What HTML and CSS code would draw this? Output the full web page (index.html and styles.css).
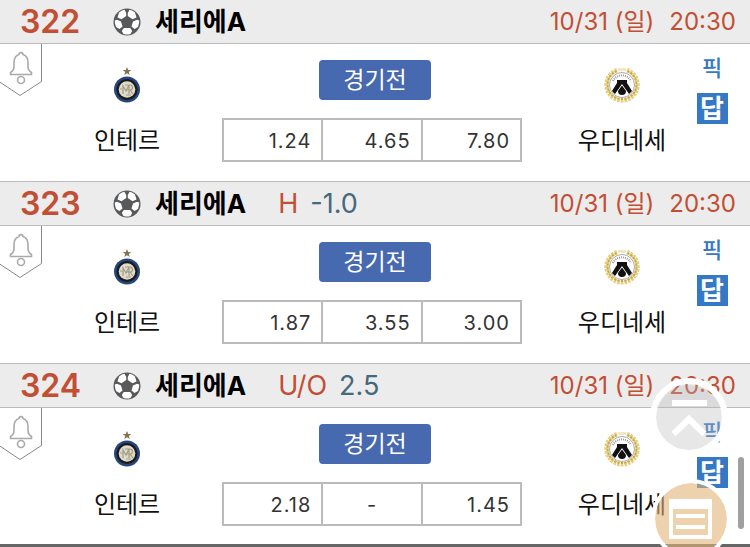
FILE: index.html
```
<!DOCTYPE html>
<html lang="ko">
<head>
    <meta charset="UTF-8">
    <meta name="viewport" content="width=device-width, initial-scale=1.0">
    <title>세리에A</title>
    <link rel="stylesheet" href="styles.css">
</head>
<body>
    <svg class="sprite" aria-hidden="true">
        <symbol id="ball" viewBox="0 0 28 28">
            <circle cx="14" cy="14" r="13.500" fill="#58595a"/>
            <g fill="#fff">
                <path d="M6 4.500Q9 1.800 11.500 1.800L13.200 5V8L8.500 11.300 4.500 9.500z"/>
                <path d="M22 4.500Q19 1.800 16.500 1.800L14.800 5V8l4.700 3.300 4-1.800z"/>
                <path d="M1.800 12.500L4 11.800 8 13.500 9.500 18.500 6.500 21 3 19Q1.500 15 1.800 12.500z"/>
                <path d="M26.200 12.500L24 11.800 20 13.500 18.500 18.500 21.500 21 25 19Q26.500 15 26.200 12.500z"/>
                <path d="M10.800 20h6.400l2 3-1.700 3q-3.500 1-7 0l-1.700-3z"/>
            </g>
        </symbol>
        <symbol id="bell" viewBox="0 0 42 52">
            <path d="M-1 37.500L20 51.500 41.500 37.500V-1" fill="#fff" stroke="#888"/>
            <g fill="none" stroke="#aaa" stroke-width="1.600">
                <path d="M10.500 30.500v-2c2.500-1.500 3.500-3 3.500-6v-4c0-4 2-7 5-8 0-2.500 4-2.500 4 0 3 1 5 4 5 8v4c0 3 1 4.500 3.500 6v2z"/>
                <circle cx="21" cy="36" r="3.500"/>
            </g>
        </symbol>
        <symbol id="inter" viewBox="0 0 36 36">
            <path d="M18 0l1.200 3h3.100l-2.500 2 1 3-2.800-1.800L15.200 8l1-3-2.500-2h3.100z" fill="#80754e"/>
            <circle cx="18" cy="22.500" r="13" fill="#26447f"/>
            <circle cx="18" cy="22.500" r="10.500" fill="#1b1a17"/>
            <circle cx="18" cy="22.500" r="8.300" fill="#dedbcd"/>
            <path d="M14 27v-8l3 5 3-6v9M16 18h5a2.500 2.500 0 010 5h-4M21 23l3 4M13 22h-2M17 28h5" fill="none" stroke="#a39d85" stroke-width="1.200"/>
        </symbol>
        <symbol id="udinese" viewBox="0 0 36 36">
            <path d="M13 3.200A15.500 15.500 0 1023 3.200" fill="none" stroke="#e4cf83" stroke-width="4.500" stroke-dasharray="2.500 1"/>
            <path d="M12.500 4.200A14.500 14.500 0 1023.500 4.200" fill="none" stroke="#c9a637" stroke-width="2" stroke-dasharray="2 1.500"/>
            <path d="M14.500 2.500h7" stroke="#e0c670" stroke-width="2.500" stroke-dasharray="1 1"/>
            <circle cx="18" cy="18" r="12.500" fill="#fff" stroke="#aaa"/>
            <path d="M9 14a10 10 0 0118 0" fill="none" stroke="#999" stroke-width="2" stroke-dasharray="1 1"/>
            <path d="M13 13h10v3l5 8-3 3-7-10-7 10-3-3 5-8z" fill="#111"/>
            <path d="M18 18.500l4 5.500a4 4 0 01-8 0z" fill="#111"/>
        </symbol>
    </svg>

    <main class="list">
        <section class="match">
            <header class="match-head">
                <span class="num">322</span>
                <svg class="ball"><use href="#ball"/></svg>
                <span class="league">세리에A</span>
                <span class="date">10/31 (일)</span>
                <span class="time">20:30</span>
            </header>
            <div class="match-body">
                <button class="alarm" aria-label="알림"><svg><use href="#bell"/></svg></button>
                <div class="team">
                    <svg class="emblem"><use href="#inter"/></svg>
                    <span class="team-name">인테르</span>
                </div>
                <div class="center">
                    <button class="status">경기전</button>
                    <table class="odds"><tr><td>1.24</td><td>4.65</td><td>7.80</td></tr></table>
                </div>
                <div class="team away">
                    <svg class="emblem"><use href="#udinese"/></svg>
                    <span class="team-name">우디네세</span>
                </div>
                <div class="links">
                    <a class="pick" href="#">픽</a>
                    <a class="answer" href="#">답</a>
                </div>
            </div>
        </section>

        <section class="match">
            <header class="match-head">
                <span class="num">323</span>
                <svg class="ball"><use href="#ball"/></svg>
                <span class="league">세리에A</span>
                <span class="type">H</span>
                <span class="line">-1.0</span>
                <span class="date">10/31 (일)</span>
                <span class="time">20:30</span>
            </header>
            <div class="match-body">
                <button class="alarm" aria-label="알림"><svg><use href="#bell"/></svg></button>
                <div class="team">
                    <svg class="emblem"><use href="#inter"/></svg>
                    <span class="team-name">인테르</span>
                </div>
                <div class="center">
                    <button class="status">경기전</button>
                    <table class="odds"><tr><td>1.87</td><td>3.55</td><td>3.00</td></tr></table>
                </div>
                <div class="team away">
                    <svg class="emblem"><use href="#udinese"/></svg>
                    <span class="team-name">우디네세</span>
                </div>
                <div class="links">
                    <a class="pick" href="#">픽</a>
                    <a class="answer" href="#">답</a>
                </div>
            </div>
        </section>

        <section class="match">
            <header class="match-head">
                <span class="num">324</span>
                <svg class="ball"><use href="#ball"/></svg>
                <span class="league">세리에A</span>
                <span class="type">U/O</span>
                <span class="line">2.5</span>
                <span class="date">10/31 (일)</span>
                <span class="time">20:30</span>
            </header>
            <div class="match-body">
                <button class="alarm" aria-label="알림"><svg><use href="#bell"/></svg></button>
                <div class="team">
                    <svg class="emblem"><use href="#inter"/></svg>
                    <span class="team-name">인테르</span>
                </div>
                <div class="center">
                    <button class="status">경기전</button>
                    <table class="odds"><tr><td>2.18</td><td class="none">-</td><td>1.45</td></tr></table>
                </div>
                <div class="team away">
                    <svg class="emblem"><use href="#udinese"/></svg>
                    <span class="team-name">우디네세</span>
                </div>
                <div class="links">
                    <a class="pick" href="#">픽</a>
                    <a class="answer" href="#">답</a>
                </div>
            </div>
        </section>
    </main>

    <button class="float go-top" aria-label="맨 위로">
        <svg viewBox="0 0 78 78">
            <circle cx="39" cy="40" r="33" fill="#bbb" fill-opacity=".35"/>
            <circle cx="39" cy="39" r="36" fill="none" stroke="#fff" stroke-width="6"/>
            <path d="M22 25h35M23.500 56L39 41l15.500 15" fill="none" stroke="#fff" stroke-width="6"/>
        </svg>
    </button>
    <button class="float go-slip" aria-label="목록">
        <svg viewBox="0 0 80 80">
            <circle cx="40" cy="40" r="36" fill="#e2b377" fill-opacity=".6"/>
            <circle cx="40" cy="40" r="38" fill="none" stroke="#fff" stroke-width="4"/>
            <path d="M18 20h43v40H18zM22 30v26h35V30zM25 35h29v4H25zM25 46h29v4H25z" fill="#fff" fill-rule="evenodd"/>
        </svg>
    </button>
    <div class="scroll-thumb"></div>
</body>
</html>
```
FILE: styles.css
```
* {
    box-sizing: border-box;
}

body {
    margin: 0;
    background: #fff;
    color: #111;
    font-family: Inter, "Noto Sans CJK KR", sans-serif;
    overflow: hidden;
}

button {
    border: 0;
    padding: 0;
    background: none;
    font-family: inherit;
    cursor: pointer;
}

a {
    text-decoration: none;
}

.sprite {
    display: none;
}

.list {
    border-bottom: 8px solid #666;
}

.match {
    border-bottom: 1px solid #bbb;
}

.match:last-child {
    border-bottom: 0;
}

.match-head {
    display: flex;
    align-items: center;
    height: 44px;
    padding: 0 14px 0 20px;
    background: #ececec;
    border-bottom: 1px solid #bbb;
    font-size: 24px;
    line-height: 42px;
    white-space: nowrap;
}

.num {
    width: 93px;
    color: #c24e33;
    font-size: 32px;
    font-weight: 600;
}

.ball {
    width: 28px;
    height: 28px;
    margin-right: 14px;
}

.league {
    color: #000;
    font-size: 26px;
    font-weight: 700;
}

.type {
    margin-left: 32px;
    color: #c24e33;
    font-size: 27px;
}

.line {
    margin-left: 12px;
    color: #44687c;
    font-size: 27px;
}

.date {
    margin-left: auto;
    color: #c24e33;
}

.time {
    margin-left: 15px;
    color: #c24e33;
}

.match-body {
    display: grid;
    grid-template-columns: 190fr 300fr 174fr 32px;
    position: relative;
    height: 137px;
    padding: 0 22px 0 32px;
}

.match:last-child .match-body {
    height: 136px;
}

.alarm {
    position: absolute;
    left: 0;
    top: 0;
    width: 42px;
    height: 52px;
}

.alarm svg {
    display: block;
    width: 42px;
    height: 52px;
}

.team {
    display: flex;
    flex-direction: column;
    align-items: center;
    padding-top: 23px;
}

.away {
    padding-left: 26px;
}

.emblem {
    width: 36px;
    height: 36px;
}

.team-name {
    margin-top: 20px;
    font-size: 24px;
    line-height: 36px;
    white-space: nowrap;
}

.center {
    display: flex;
    flex-direction: column;
    align-items: center;
    padding-top: 16px;
}

.status {
    width: 112px;
    height: 40px;
    margin-left: 6px;
    border-radius: 4px;
    background: #4769b0;
    color: #fff;
    font-size: 23px;
    line-height: 40px;
}

.odds {
    width: 100%;
    margin-top: 18px;
    border-collapse: collapse;
    table-layout: fixed;
}

.odds td {
    height: 42px;
    padding: 2px 10px 0;
    border: 2px solid #bbb;
    color: #333;
    font-size: 20px;
    letter-spacing: 1px;
    text-align: right;
}

.odds .none {
    text-align: center;
}

.links {
    display: flex;
    flex-direction: column;
    align-items: center;
    padding-top: 8px;
}

.pick {
    color: #3478c6;
    font-size: 22px;
    font-weight: 500;
    line-height: 32px;
}

.answer {
    width: 31px;
    height: 31px;
    margin-top: 9px;
    background: #3478c6;
    color: #fff;
    font-size: 26px;
    font-weight: 700;
    line-height: 32px;
    text-align: center;
}

/* floating buttons */
.float {
    position: fixed;
}

.float svg {
    display: block;
    width: 100%;
    height: 100%;
}

.go-top {
    right: 22px;
    bottom: 91px;
    width: 78px;
    height: 78px;
}

.go-slip {
    right: 19px;
    bottom: -12px;
    width: 80px;
    height: 80px;
}

.scroll-thumb {
    position: fixed;
    right: 6px;
    bottom: 18px;
    width: 6px;
    height: 72px;
    border-radius: 3px;
    background: #a0a0a0;
}
```
